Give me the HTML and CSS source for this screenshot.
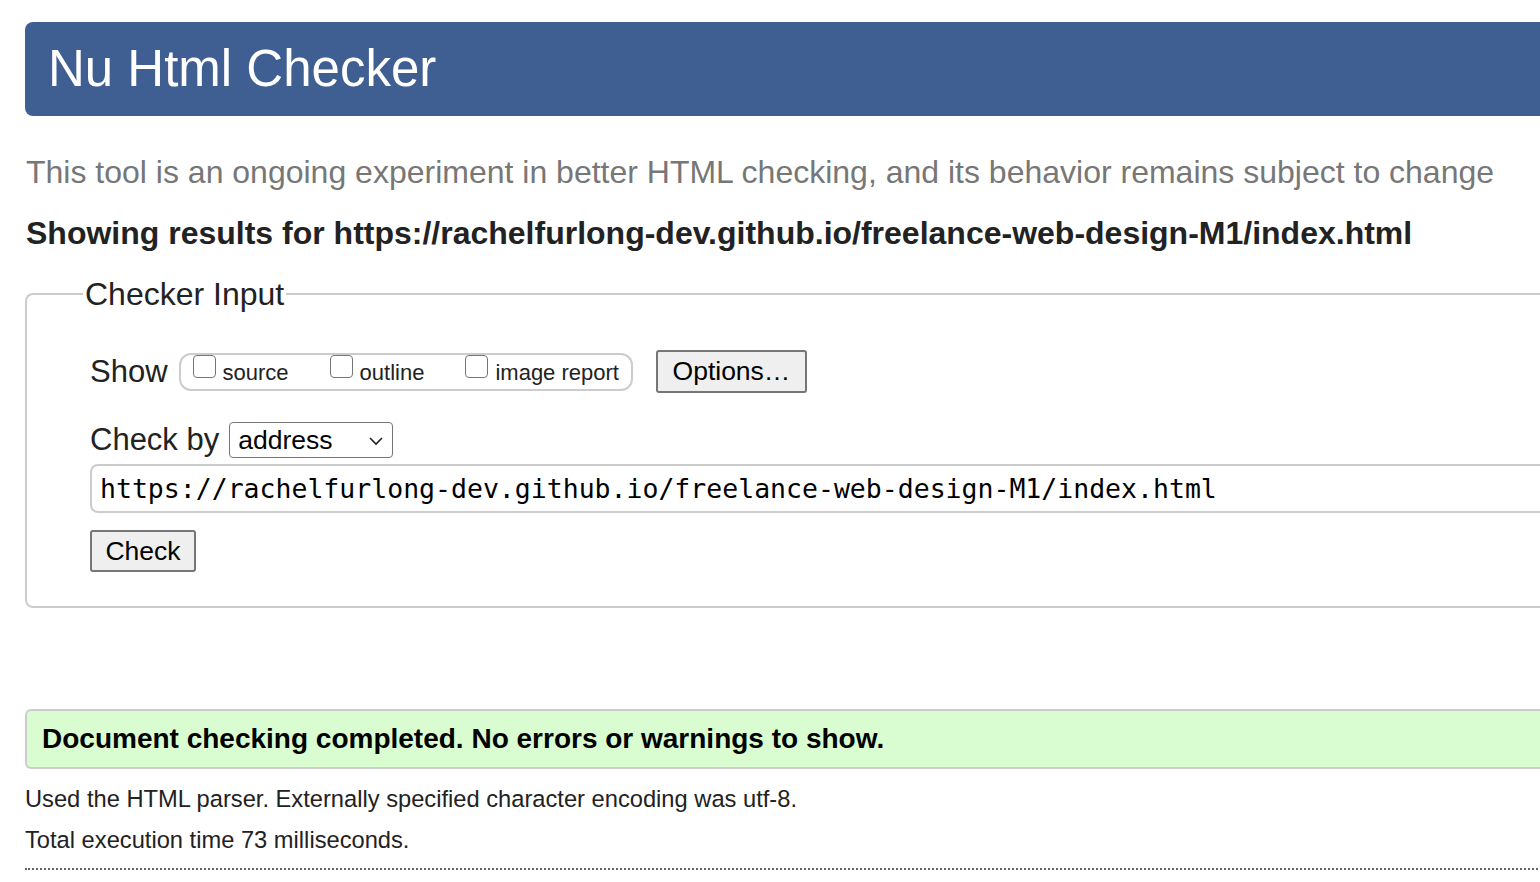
FILE: index.html
```html
<!DOCTYPE html>
<html lang="en">
<head>
<meta charset="utf-8">
<title>Nu Html Checker</title>
<link rel="stylesheet" href="styles.css">
</head>
<body>
<div class="page">
  <header class="banner"><h1 class="title">Nu Html Checker</h1></header>
  <p class="tagline">This tool is an ongoing experiment in better HTML checking, and its behavior remains subject to change</p>
  <p class="showing">Showing results for https://rachelfurlong-dev.github.io/freelance-web-design-M1/index.html</p>
  <fieldset class="input-box">
    <legend class="legend">Checker Input</legend>
    <div class="row show-row">
      <span class="label">Show</span>
      <span class="group">
        <label class="opt"><span class="box"></span>source</label>
        <label class="opt"><span class="box"></span>outline</label>
        <label class="opt"><span class="box"></span>image report</label>
      </span>
      <span class="btn options">Options…</span>
    </div>
    <div class="row by-row">
      <span class="label">Check by</span>
      <span class="select">address<svg class="chev" width="16" height="10" viewBox="0 0 16 10"><path d="M2 2 L8 8 L14 2" fill="none" stroke="#222" stroke-width="1.6"/></svg></span>
    </div>
    <div class="url">https://rachelfurlong-dev.github.io/freelance-web-design-M1/index.html</div>
    <div class="row"><span class="btn check">Check</span></div>
  </fieldset>
  <div class="success">Document checking completed. No errors or warnings to show.</div>
  <p class="stat">Used the HTML parser. Externally specified character encoding was utf-8.</p>
  <p class="stat">Total execution time 73 milliseconds.</p>
  <div class="rule"></div>
</div>
</body>
</html>
```

FILE: styles.css
```css
html, body {
  margin: 0;
  padding: 0;
  overflow: hidden;
  background: #fff;
}
body {
  font-family: "Liberation Sans", Arial, sans-serif;
  color: #222;
}
.page {
  width: 1600px;
  padding: 22px 0 0 25px;
  display: flex;
  flex-direction: column;
}
.banner {
  background: #3f5e91;
  height: 94px;
  border-radius: 8px 0 0 8px;
  display: flex;
  align-items: center;
  padding-left: 23px;
}
.title {
  margin: 0;
  color: #fff;
  font-weight: normal;
  font-size: 51px;
  line-height: 1;
  position: relative;
  top: -1px;
}
.tagline {
  margin: 38px 0 0 1px;
  font-size: 32px;
  line-height: 36px;
  color: #777;
}
.showing {
  margin: 25px 0 0 1px;
  font-size: 32px;
  line-height: 36px;
  font-weight: bold;
  color: #222;
}
.input-box {
  margin: 25px 0 0 0;
  border: 2px solid #ccc;
  border-radius: 8px 0 0 8px;
  border-right: none;
  padding: 20px 0 34px 63px;
  min-width: 0;
}
.legend {
  font-size: 32px;
  padding: 0 2px;
  margin-left: -7px;
  line-height: 36px;
}
.row {
  display: flex;
  align-items: center;
}
.label {
  font-size: 31px;
  line-height: 36px;
}
.show-row {
  margin-top: 18px;
}
.group {
  display: inline-flex;
  align-items: center;
  border: 2px solid #ccc;
  border-radius: 12px;
  height: 34px;
  padding: 0 12px 0 12px;
  margin-left: 11px;
}
.opt {
  display: inline-flex;
  align-items: center;
  font-size: 22px;
  margin-right: 41px;
  position: relative;
  top: 1px;
}
.opt:last-child { margin-right: 0; }
.box {
  width: 21px;
  height: 21px;
  border: 1.5px solid #767676;
  border-radius: 4px;
  margin-right: 7px;
  position: relative;
  top: -6px;
}
.btn {
  display: inline-flex;
  align-items: center;
  justify-content: center;
  background: #efefef;
  border: 2px solid #767676;
  border-radius: 3px;
  font-size: 26.5px;
  color: #000;
  box-sizing: border-box;
}
.options {
  margin-left: 23px;
  width: 151px;
  height: 43px;
}
.by-row {
  margin-top: 29px;
}
.select {
  margin-left: 10px;
  box-sizing: border-box;
  width: 164px;
  height: 36px;
  border: 1.5px solid #767676;
  border-radius: 4px;
  display: inline-flex;
  align-items: center;
  justify-content: space-between;
  padding: 0 8px 0 8px;
  font-size: 26.5px;
  color: #000;
}
.chev { margin-top: 2px; }
.url {
  margin-top: 6px;
  height: 49px;
  box-sizing: border-box;
  border: 2px solid #ccc;
  border-right: none;
  border-radius: 8px 0 0 8px;
  display: flex;
  align-items: center;
  padding-left: 8px;
  font-family: "DejaVu Sans Mono", "Liberation Mono", monospace;
  font-size: 26.5px;
  color: #000;
}
.check {
  margin-top: 17px;
  width: 106px;
  height: 42px;
}
.success {
  margin-top: 101px;
  height: 60px;
  box-sizing: border-box;
  background: #d9fdd1;
  border: 2px solid #ccc;
  border-right: none;
  border-radius: 6px 0 0 6px;
  display: flex;
  align-items: center;
  padding-left: 15px;
  font-weight: bold;
  font-size: 28px;
  color: #000;
}
.stat {
  margin: 0;
  font-size: 23.7px;
  line-height: 28px;
  color: #222;
}
.success + .stat { margin-top: 16px; }
.stat + .stat { margin-top: 13px; }
.rule {
  margin-top: 14px;
  border-top: 2px dotted #666;
  width: 1600px;
}
```
